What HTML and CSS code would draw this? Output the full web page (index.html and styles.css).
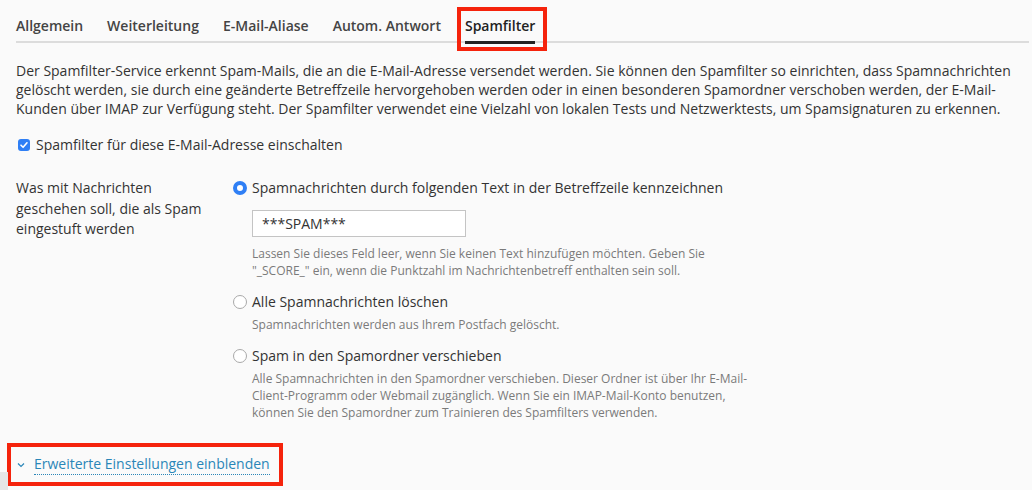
FILE: index.html
```html
<!DOCTYPE html>
<html lang="de">
<head>
<meta charset="utf-8">
<title>Spamfilter</title>
<link rel="stylesheet" href="styles.css">
</head>
<body>
<div class="page">
  <nav class="tabs">
    <span class="tab">Allgemein</span>
    <span class="tab">Weiterleitung</span>
    <span class="tab">E-Mail-Aliase</span>
    <span class="tab">Autom. Antwort</span>
    <span class="tab tab-active highlight">Spamfilter</span>
  </nav>

  <p class="intro">Der Spamfilter-Service erkennt Spam-Mails, die an die E-Mail-Adresse versendet werden. Sie können den Spamfilter so einrichten, dass Spamnachrichten gelöscht werden, sie durch eine geänderte Betreffzeile hervorgehoben werden oder in einen besonderen Spamordner verschoben werden, der E-Mail-Kunden über IMAP zur Verfügung steht. Der Spamfilter verwendet eine Vielzahl von lokalen Tests und Netzwerktests, um Spamsignaturen zu erkennen.</p>

  <label class="check-row">
    <span class="checkbox">
      <svg width="10" height="10" viewBox="0 0 10 10"><path d="M2 5.2 L4.1 7.3 L8 2.8" fill="none" stroke="#fff" stroke-width="1.6" stroke-linecap="round" stroke-linejoin="round"/></svg>
    </span>
    <span>Spamfilter für diese E-Mail-Adresse einschalten</span>
  </label>

  <div class="form-row">
    <div class="form-label"><span class="form-label-text">Was mit Nachrichten geschehen soll, die als Spam eingestuft werden</span></div>
    <div class="options">
      <div class="option">
        <div class="radio-row"><span class="radio radio-on"></span><span>Spamnachrichten durch folgenden Text in der Betreffzeile kennzeichnen</span></div>
        <div class="input">***SPAM***</div>
        <div class="help help-after-input">Lassen Sie dieses Feld leer, wenn Sie keinen Text hinzufügen möchten. Geben Sie<br>"_SCORE_" ein, wenn die Punktzahl im Nachrichtenbetreff enthalten sein soll.</div>
      </div>
      <div class="option">
        <div class="radio-row"><span class="radio"></span><span>Alle Spamnachrichten löschen</span></div>
        <div class="help">Spamnachrichten werden aus Ihrem Postfach gelöscht.</div>
      </div>
      <div class="option">
        <div class="radio-row"><span class="radio"></span><span>Spam in den Spamordner verschieben</span></div>
        <div class="help">Alle Spamnachrichten in den Spamordner verschieben. Dieser Ordner ist über Ihr E-Mail-<br>Client-Programm oder Webmail zugänglich. Wenn Sie ein IMAP-Mail-Konto benutzen,<br>können Sie den Spamordner zum Trainieren des Spamfilters verwenden.</div>
      </div>
    </div>
  </div>

  <div class="more highlight-more">
    <svg class="chev" width="8" height="6" viewBox="0 0 8 6"><path d="M1 1.5 L4 4.5 L7 1.5" fill="none" stroke="#2a86b8" stroke-width="1.2"/></svg>
    <span class="more-link">Erweiterte Einstellungen einblenden</span>
  </div>
</div>
<div class="edge"></div>
</body>
</html>
```

FILE: styles.css
```css
html, body {
  margin: 0;
  padding: 0;
}
body {
  background: #fafafa;
  font-family: "Open Sans", "Liberation Sans", sans-serif;
  font-size: 14px;
  color: #333;
  width: 1032px;
  height: 490px;
  overflow: hidden;
  position: relative;
}
.page {
  padding: 0 3px 0 16px;
}
.tabs {
  display: flex;
  gap: 24px;
  border-bottom: 2px solid #dcdcdc;
  padding-top: 16px;
}
.tab {
  font-weight: 600;
  color: #444;
  line-height: 20px;
  padding-bottom: 5px;
}
.tab-active {
  color: #222;
  border-bottom: 3px solid #222;
  margin-bottom: -3px;
  padding-bottom: 5px;
  position: relative;
}
.highlight::after {
  content: "";
  position: absolute;
  left: -8px;
  right: -12px;
  top: -9px;
  bottom: -10px;
  border: 4px solid #f5230c;
}
.intro {
  margin: 18px 0 0;
  line-height: 19px;
  color: #333;
}
.check-row {
  display: flex;
  align-items: center;
  gap: 6px;
  margin-top: 17px;
  line-height: 19px;
  padding-left: 2px;
}
.checkbox {
  width: 12px;
  height: 12px;
  border-radius: 3px;
  background: #2f7ff5;
  display: flex;
  align-items: center;
  justify-content: center;
}
.form-row {
  display: flex;
  margin-top: 24px;
}
.form-label {
  width: 217px;
  flex: none;
  line-height: 20.5px;
  color: #333;
}
.form-label-text {
  display: block;
  max-width: 195px;
}
.options {
  display: flex;
  flex-direction: column;
  gap: 13px;
}
.radio-row {
  display: flex;
  align-items: center;
  gap: 6px;
  line-height: 20px;
}
.radio {
  width: 14px;
  height: 14px;
  border: 1px solid #a9a9a9;
  border-radius: 50%;
  background: #fff;
  box-sizing: border-box;
  margin-right: -1px;
}
.radio-on {
  border: 4px solid #2f7ff5;
}
.input {
  margin: 12px 0 0 19px;
  width: 214px;
  height: 27px;
  box-sizing: border-box;
  border: 1px solid #c4c4c4;
  background: #fff;
  padding: 0 9px;
  line-height: 25px;
  color: #333;
}
.help {
  margin: 4px 0 0 19px;
  font-size: 12px;
  line-height: 17px;
  color: #7a7a7a;
  white-space: nowrap;
}
.help-after-input {
  margin-top: 8px;
}
.more {
  margin-top: 33px;
  display: flex;
  align-items: center;
  gap: 9px;
  padding-left: 1px;
  position: relative;
  width: max-content;
}
.chev {
  display: block;
}
.more-link {
  color: #2a86b8;
  line-height: 20px;
  border-bottom: 1px dotted #2a86b8;
}
.highlight-more::after {
  content: "";
  position: absolute;
  left: -9px;
  right: -13px;
  top: -11px;
  bottom: -11px;
  border: 4px solid #f5230c;
}
.edge {
  position: absolute;
  left: 0;
  bottom: 0;
  width: 8px;
  height: 18px;
  background: #e6e6e6;
}
```
